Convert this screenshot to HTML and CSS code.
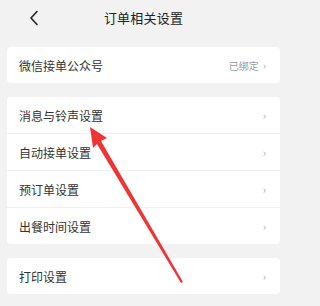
FILE: index.html
```html
<!DOCTYPE html>
<html lang="zh">
<head>
<meta charset="utf-8">
<link rel="stylesheet" href="styles.css">
</head>
<body>
<div class="page">
  <header class="topbar">
    <div class="back">
      <svg width="10" height="16" viewBox="0 0 10 16"><path d="M8 1.5 L2 8 L8 14.5" fill="none" stroke="#222" stroke-width="1.6" stroke-linecap="round" stroke-linejoin="round"/></svg>
    </div>
    <div class="title">订单相关设置</div>
    <div></div>
  </header>
  <main class="content">
    <section class="card">
      <div class="row"><span class="label">微信接单公众号</span><span class="right"><span class="value">已绑定</span><span class="chev">›</span></span></div>
    </section>
    <section class="card">
      <div class="row"><span class="label">消息与铃声设置</span><span class="right"><span class="chev">›</span></span></div>
      <div class="row"><span class="label">自动接单设置</span><span class="right"><span class="chev">›</span></span></div>
      <div class="row"><span class="label">预订单设置</span><span class="right"><span class="chev">›</span></span></div>
      <div class="row"><span class="label">出餐时间设置</span><span class="right"><span class="chev">›</span></span></div>
    </section>
    <section class="card">
      <div class="row"><span class="label">打印设置</span><span class="right"><span class="chev">›</span></span></div>
    </section>
  </main>
  <svg class="arrow" width="287" height="306" viewBox="0 0 287 306">
    <polygon points="90,127 93,148 97,144 181,283 183,282 101,141 107,138" fill="#ef3434"/>
  </svg>
</div>
</body>
</html>
```

FILE: styles.css
```css
html, body {
  margin: 0;
  padding: 0;
  background: #f2f2f2;
}
body {
  font-family: "Noto Sans CJK SC", "Noto Sans", sans-serif;
  color: #333;
  width: 287px;
  height: 306px;
  overflow: hidden;
}
.page {
  position: relative;
  width: 287px;
  height: 306px;
}
.topbar {
  display: grid;
  grid-template-columns: 1fr auto 1fr;
  align-items: center;
  height: 35px;
}
.back {
  padding-left: 29px;
  display: flex;
  align-items: center;
}
.back svg { display: block; }
.title {
  font-size: 13px;
  color: #222;
  letter-spacing: 0.2px;
}
.content {
  display: flex;
  flex-direction: column;
  gap: 14px;
  padding: 12px 7px 0;
}
.card {
  background: #fff;
  border-radius: 4px;
  display: flex;
  flex-direction: column;
}
.row {
  height: 36px;
  display: flex;
  align-items: center;
  justify-content: space-between;
  padding: 0 14px 0 12px;
  border-top: 1px solid #f1f1f1;
}
.row:first-child { border-top: none; }
.label {
  font-size: 12px;
  color: #333;
}
.right {
  display: flex;
  align-items: center;
  gap: 4px;
}
.value {
  font-size: 10px;
  color: #999;
}
.chev {
  font-size: 11px;
  color: #aaa;
  line-height: 1;
}
.arrow {
  position: absolute;
  left: 0;
  top: 0;
  pointer-events: none;
}
```
